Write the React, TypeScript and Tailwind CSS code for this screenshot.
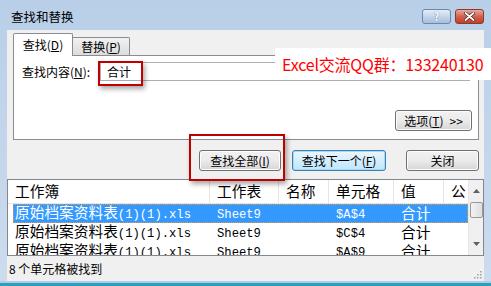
import React from 'react';

const cjk = '"Noto Sans CJK SC", "Liberation Sans", sans-serif';

const cols = [
  { key: 'book', label: '工作簿', w: 'w-[202px]' },
  { key: 'sheet', label: '工作表', w: 'w-[69px]' },
  { key: 'name', label: '名称', w: 'w-[50px]' },
  { key: 'cell', label: '单元格', w: 'w-[65px]' },
  { key: 'val', label: '值', w: 'w-[50px]' },
  { key: 'f', label: '公', w: 'w-[25px]' },
];

const rows = [
  { cell: '$A$4', selected: true },
  { cell: '$C$4', selected: false },
  { cell: '$A$9', selected: false },
];

function Btn({ children, className = '', focused = false }: { children: React.ReactNode; className?: string; focused?: boolean }) {
  return (
    <div
      className={`h-[21px] flex items-center justify-center rounded-[3px] border text-[12px] text-black ${
        focused
          ? 'border-[#3c7fb1] bg-gradient-to-b from-[#eaf6fd] to-[#bee6fd] shadow-[inset_0_0_0_1px_#a7d9f5]'
          : 'border-[#707070] bg-gradient-to-b from-[#f2f2f2] via-[#ebebeb] to-[#d6d6d6] shadow-[inset_0_0_0_1px_#fcfcfc]'
      } ${className}`}
    >
      {children}
    </div>
  );
}

function Mono({ children }: { children: React.ReactNode }) {
  return <span className="text-[12.2px]" style={{ fontFamily: '"Liberation Mono", monospace' }}>{children}</span>;
}

export default function App() {
  return (
    <div className="relative w-[491px] h-[286px] overflow-hidden bg-gradient-to-b from-[#b9cfe8] to-[#cddcee]" style={{ fontFamily: cjk }}>
      {/* Title bar */}
      <div className="h-[30px] flex items-start">
        <span className="ml-[11px] mt-[9px] text-[12.5px] leading-[16px] text-black">查找和替换</span>
        <div className="ml-auto mt-[9px] mr-[7px] flex gap-[4px]">
          <div className="w-[29px] h-[15px] rounded-[3px] border border-[#6a87ad] bg-gradient-to-b from-[#e4edf7] via-[#c3d5ea] to-[#a9c0dc] flex items-center justify-center text-[11px] font-bold text-white [text-shadow:0_0_1px_#3b5a82] leading-none">
            ?
          </div>
          <div className="w-[29px] h-[15px] rounded-[3px] border border-[#8a3b30] bg-gradient-to-b from-[#e9a99c] via-[#d0624f] to-[#c23d26] flex items-center justify-center">
            <svg width="11" height="9" viewBox="0 0 11 9">
              <path d="M1.5 1L9.5 8M9.5 1L1.5 8" stroke="#4a2018" strokeWidth="3.2" strokeLinecap="round" />
              <path d="M1.5 1L9.5 8M9.5 1L1.5 8" stroke="#ffffff" strokeWidth="1.8" strokeLinecap="round" />
            </svg>
          </div>
        </div>
      </div>

      {/* Dialog body */}
      <div className="mx-[7px] h-[251px] bg-[#f0f0f0] flex flex-col">
        {/* Tabs */}
        <div className="mt-[3px] ml-[6px] mr-[5px] flex items-end h-[22px]">
          <div className="h-[23px] w-[60px] border border-b-0 border-[#898c95] bg-white rounded-t-[2px] flex items-center justify-center text-[12px] relative z-10 translate-y-[1px]">
            查找(<u>D</u>)
          </div>
          <div className="h-[18px] w-[57px] border border-b-0 border-l-0 border-[#898c95] bg-gradient-to-b from-[#f2f2f2] to-[#dcdcdc] rounded-tr-[2px] flex items-center justify-center text-[12px]">
            替换(<u>P</u>)
          </div>
        </div>
        <div className="ml-[6px] mr-[5px] h-[85px] border border-[#898c95] bg-white flex flex-col">
          <div className="mt-[6px] ml-[8px] flex items-center h-[19px]">
            <span className="text-[12px] w-[78px]">查找内容(<u>N</u>):</span>
            <div className="w-[370px] h-[19px] border border-[#abadb3] bg-white flex items-center">
              <span className="ml-[6px] text-[12px]">合计</span>
              <div className="ml-auto mr-[1px] mt-[10px] w-[14px] h-[6px] bg-[#d9d9d9] border border-[#9a9a9a]" />
            </div>
          </div>
          <div className="mt-auto mb-[8px] self-end mr-[6px]">
            <Btn className="w-[77px] h-[19px] gap-[6px]">
              <span>选项(<u>T</u>)</span>
              <span>&gt;&gt;</span>
            </Btn>
          </div>
        </div>

        {/* Action buttons */}
        <div className="mt-[10px] flex pl-[192px] gap-[11px]">
          <Btn className="w-[82px]">查找全部(<u>I</u>)</Btn>
          <Btn className="w-[94px]" focused>查找下一个(<u>F</u>)</Btn>
          <Btn className="w-[73px] ml-[9px]">关闭</Btn>
        </div>

        {/* Result list */}
        <div className="mt-[8px] h-[77px] border border-[#828790] bg-white flex overflow-hidden">
          <div className="flex-1 flex flex-col overflow-hidden">
            <div className="h-[24px] flex border-b border-[#e5e5e5] shrink-0">
              {cols.map((c) => (
                <div key={c.key} className={`${c.w} shrink-0 border-r border-[#e5e5e5] flex items-center pl-[7px] text-[14.7px] leading-none overflow-hidden whitespace-nowrap`}>
                  {c.label}
                </div>
              ))}
            </div>
            {rows.map((r, i) => (
              <div
                key={i}
                className={`h-[19px] shrink-0 ml-[5px] flex items-center whitespace-nowrap text-[14.7px] leading-none ${
                  r.selected ? 'bg-[#3399ff] text-white outline outline-1 outline-dotted outline-[#e89b3c] -outline-offset-1' : 'text-black'
                }`}
              >
                <div className="w-[197px] shrink-0 pl-[2px]">
                  原始档案资料表<Mono>(1)(1).xls</Mono>
                </div>
                <div className="w-[69px] shrink-0 pl-[7px]"><Mono>Sheet9</Mono></div>
                <div className="w-[50px] shrink-0" />
                <div className="w-[65px] shrink-0 pl-[7px]"><Mono>{r.cell}</Mono></div>
                <div className="w-[50px] shrink-0 pl-[7px]">合计</div>
              </div>
            ))}
          </div>
          {/* Scrollbar */}
          <div className="w-[15px] h-full bg-[#f0f0f0] border-l border-[#e6e6e6] flex flex-col items-center">
            <div className="h-[22px] flex items-center justify-center">
              <svg width="7" height="4" viewBox="0 0 7 4"><path d="M0 4L3.5 0L7 4Z" fill="#606060" /></svg>
            </div>
            <div className="w-[13px] h-[16px] rounded-[2px] border border-[#9a9a9a] bg-gradient-to-r from-[#f3f3f3] to-[#dedede]" />
            <div className="mt-auto h-[22px] flex items-center justify-center">
              <svg width="7" height="4" viewBox="0 0 7 4"><path d="M0 0L3.5 4L7 0Z" fill="#606060" /></svg>
            </div>
          </div>
        </div>

        {/* Status bar */}
        <div className="flex-1 flex items-center pl-[2px] relative">
          <span className="text-[12px]">8 个单元格被找到</span>
          <svg className="absolute right-[2px] bottom-[2px]" width="10" height="10" viewBox="0 0 10 10">
            {[
              [8, 2], [8, 5], [5, 5], [8, 8], [5, 8], [2, 8],
            ].map(([x, y], i) => (
              <rect key={i} x={x} y={y} width="1.5" height="1.5" fill="#a0a0a0" />
            ))}
          </svg>
        </div>
      </div>

      {/* Bottom frame */}
      <div className="h-[2px] bg-[#b4cbe6]" />
      <div className="h-[3px] bg-[#2a9fbf]" />

      {/* Watermark label */}
      <div className="absolute left-[275px] top-[48px] w-[216px] h-[32px] bg-white flex items-center pl-[7px]">
        <span className="text-[16px] text-[#ff0000] whitespace-nowrap tracking-[-0.2px]">Excel交流QQ群：133240130</span>
      </div>

      {/* Red highlight boxes */}
      <div className="absolute left-[98px] top-[61px] w-[45px] h-[25px] border-2 border-[#c00000] shadow-[2px_3px_5px_rgba(0,0,0,0.35)]" />
      <div className="absolute left-[189px] top-[134px] w-[96px] h-[47px] border-2 border-[#c00000] shadow-[2px_3px_5px_rgba(0,0,0,0.35)]" />
    </div>
  );
}
